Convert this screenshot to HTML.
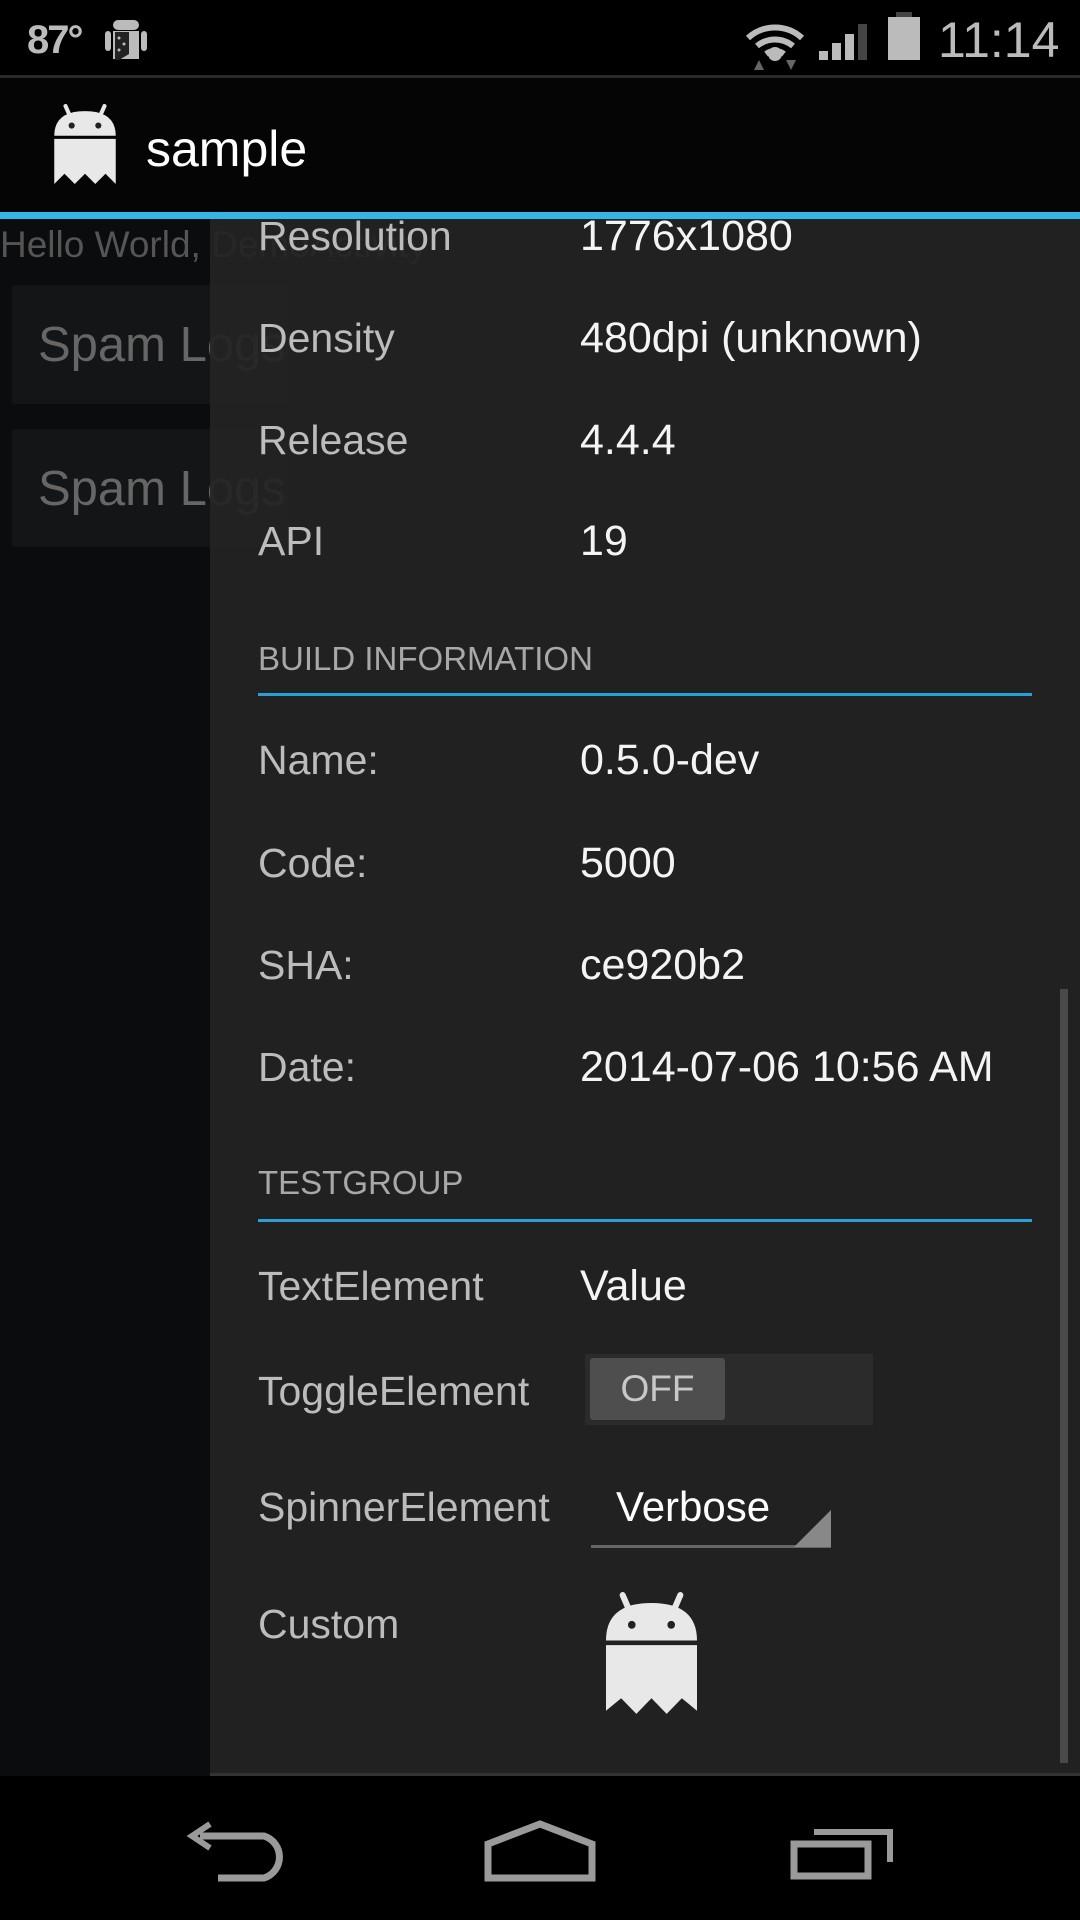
<!DOCTYPE html>
<html><head><meta charset="utf-8"><style>
*{margin:0;padding:0;box-sizing:border-box}
body{width:1080px;height:1920px;background:#0b0c0e;position:relative;overflow:hidden;font-family:"Liberation Sans",sans-serif}
.a{position:absolute;white-space:nowrap}
.lab{position:absolute;left:258px;color:#bcbcbc;font-size:41px;line-height:46px}
.val{position:absolute;left:580px;color:#f4f4f4;font-size:43px;line-height:46px}
.hdr{position:absolute;left:258px;color:#a8a8a8;font-size:33px;line-height:40px}
.line{position:absolute;left:258px;width:774px;height:3px;background:#2a9fd6}
</style></head><body>
<div class="a" style="left:0;top:0;width:1080px;height:75px;background:#000"></div>
<div class="a" style="left:0;top:75px;width:1080px;height:3px;background:#2a2a2a"></div>
<div class="a" style="left:27px;top:18px;color:#bbb;font-size:40px;font-weight:bold;letter-spacing:-2px">87°</div>
<svg class="a" style="left:105px;top:14px" width="42" height="48" viewBox="0 0 42 48"><rect x="8" y="6" width="26" height="10" rx="5" fill="#bbb"/><rect x="0" y="17" width="6" height="20" rx="3" fill="#bbb"/><rect x="36" y="17" width="6" height="20" rx="3" fill="#bbb"/><rect x="8" y="17" width="26" height="28" fill="#bbb"/><path d="M10 18 H24 V40 L14 46 H10Z" fill="#222"/><circle cx="14" cy="24" r="1.5" fill="#bbb"/><circle cx="19" cy="30" r="1.5" fill="#bbb"/><circle cx="14" cy="36" r="1.5" fill="#bbb"/></svg>
<svg class="a" style="left:744px;top:14px" width="64" height="58" viewBox="0 0 64 58"><path d="M4 24 A40 40 0 0 1 58 24" stroke="#bbb" stroke-width="6" fill="none"/><path d="M13 32 A28 28 0 0 1 49 32" stroke="#bbb" stroke-width="6" fill="none"/><path d="M22 40 A15 15 0 0 1 40 40" stroke="#bbb" stroke-width="6" fill="none"/><circle cx="31" cy="40" r="7" fill="#bbb"/><path d="M10 56 L15 46 L20 56Z" fill="#666"/><path d="M42 46 H52 L47 56Z" fill="#666"/></svg>
<div class="a" style="left:819px;top:51px;width:9px;height:9px;background:#bbb"></div>
<div class="a" style="left:832px;top:43px;width:9px;height:17px;background:#bbb"></div>
<div class="a" style="left:845px;top:34px;width:9px;height:26px;background:#bbb"></div>
<div class="a" style="left:858px;top:24px;width:9px;height:36px;background:#444"></div>
<div class="a" style="left:896px;top:12px;width:16px;height:6px;background:#444"></div>
<div class="a" style="left:888px;top:17px;width:32px;height:43px;background:#bbb"></div>
<div class="a" style="left:938px;top:11px;color:#bbb;font-size:50px">11:14</div>
<div class="a" style="left:0;top:78px;width:1080px;height:135px;background:#050505"></div>
<svg class="a" style="left:54px;top:104px" width="62" height="82" viewBox="0 0 60 80"><path d="M11 2 L15 11" stroke="#e8e8e8" stroke-width="4" stroke-linecap="round"/><path d="M49 2 L45 11" stroke="#e8e8e8" stroke-width="4" stroke-linecap="round"/><path d="M0 31 Q0 7 30 7 Q60 7 60 31Z" fill="#e8e8e8"/><circle cx="17" cy="21" r="3" fill="#222"/><circle cx="43" cy="21" r="3" fill="#222"/><path d="M0 34 H60 V78 L50 68 L40 78 L30 68 L20 78 L10 68 L0 78Z" fill="#e8e8e8"/></svg>
<div class="a" style="left:146px;top:120px;color:#fff;font-size:50px">sample</div>
<div class="a" style="left:0;top:212px;width:1080px;height:7px;background:#33b5e5"></div>
<div class="a" style="left:0;top:224px;color:#555;font-size:37px">Hello World, DemoActivity</div>
<div class="a" style="left:12px;top:285px;width:278px;height:119px;background:#141517;border-radius:3px"></div>
<div class="a" style="left:38px;top:317px;color:#666;font-size:49px">Spam Logs</div>
<div class="a" style="left:12px;top:429px;width:278px;height:118px;background:#141517;border-radius:3px"></div>
<div class="a" style="left:38px;top:461px;color:#666;font-size:49px">Spam Logs</div>
<div class="a" style="left:210px;top:219px;width:870px;height:1557px;background:rgba(35,35,35,0.93)"></div>
<div class="a" style="left:210px;top:1773px;width:870px;height:3px;background:#333"></div>
<div class="a" style="left:1060px;top:989px;width:8px;height:774px;background:#4a4a4a"></div>
<div class="lab" style="top:213px">Resolution</div><div class="val" style="top:213px">1776x1080</div>
<div class="lab" style="top:315px">Density</div><div class="val" style="top:315px">480dpi (unknown)</div>
<div class="lab" style="top:417px">Release</div><div class="val" style="top:417px">4.4.4</div>
<div class="lab" style="top:518px">API</div><div class="val" style="top:518px">19</div>
<div class="hdr" style="top:639px">BUILD INFORMATION</div><div class="line" style="top:693px"></div>
<div class="lab" style="top:737px">Name:</div><div class="val" style="top:737px">0.5.0-dev</div>
<div class="lab" style="top:840px">Code:</div><div class="val" style="top:840px">5000</div>
<div class="lab" style="top:942px">SHA:</div><div class="val" style="top:942px">ce920b2</div>
<div class="lab" style="top:1044px">Date:</div><div class="val" style="top:1044px">2014-07-06 10:56 AM</div>
<div class="hdr" style="top:1163px">TESTGROUP</div><div class="line" style="top:1219px"></div>
<div class="lab" style="top:1263px">TextElement</div><div class="val" style="top:1263px">Value</div>
<div class="lab" style="top:1368px">ToggleElement</div>
<div class="a" style="left:585px;top:1354px;width:288px;height:71px;background:#2b2b2b"></div>
<div class="a" style="left:590px;top:1358px;width:135px;height:62px;background:#4e4e4e;border-radius:3px;color:#c8c8c8;font-size:37px;text-align:center;line-height:62px">OFF</div>
<div class="lab" style="top:1484px">SpinnerElement</div>
<div class="a" style="left:616px;top:1484px;color:#fff;font-size:42px;line-height:46px">Verbose</div>
<div class="a" style="left:591px;top:1545px;width:240px;height:3px;background:#666"></div>
<svg class="a" style="left:794px;top:1510px" width="37" height="37" viewBox="0 0 37 37"><path d="M37 0 V37 H0Z" fill="#888"/></svg>
<div class="lab" style="top:1601px">Custom</div>
<svg class="a" style="left:606px;top:1592px" width="91" height="125" viewBox="0 0 60 80" preserveAspectRatio="none"><path d="M11 2 L15 11" stroke="#e8e8e8" stroke-width="4" stroke-linecap="round"/><path d="M49 2 L45 11" stroke="#e8e8e8" stroke-width="4" stroke-linecap="round"/><path d="M0 31 Q0 7 30 7 Q60 7 60 31Z" fill="#e8e8e8"/><circle cx="17" cy="21" r="2.5" fill="#222"/><circle cx="43" cy="21" r="2.5" fill="#222"/><path d="M0 34 H60 V76 L50 68 L40 78 L30 68 L20 78 L10 68 L0 76Z" fill="#e8e8e8"/></svg>
<div class="a" style="left:0;top:1776px;width:1080px;height:144px;background:#000"></div>
<svg class="a" style="left:186px;top:1820px" width="110" height="62" viewBox="0 0 110 62"><path d="M14 16 H78 A22 22 0 0 1 78 58 H32" stroke="#9a9a9a" stroke-width="7" fill="none"/><path d="M24 4 L6 16 L24 28" stroke="#9a9a9a" stroke-width="6" fill="none"/></svg>
<svg class="a" style="left:484px;top:1820px" width="112" height="62" viewBox="0 0 112 62"><path d="M4 58 V24 L56 4 L108 24 V58Z" stroke="#9a9a9a" stroke-width="7" fill="none"/></svg>
<svg class="a" style="left:790px;top:1822px" width="108" height="58" viewBox="0 0 108 58"><path d="M24 10 H100 V40" stroke="#9a9a9a" stroke-width="6" fill="none"/><rect x="4" y="22" width="74" height="32" stroke="#9a9a9a" stroke-width="7" fill="none"/></svg>
</body></html>
